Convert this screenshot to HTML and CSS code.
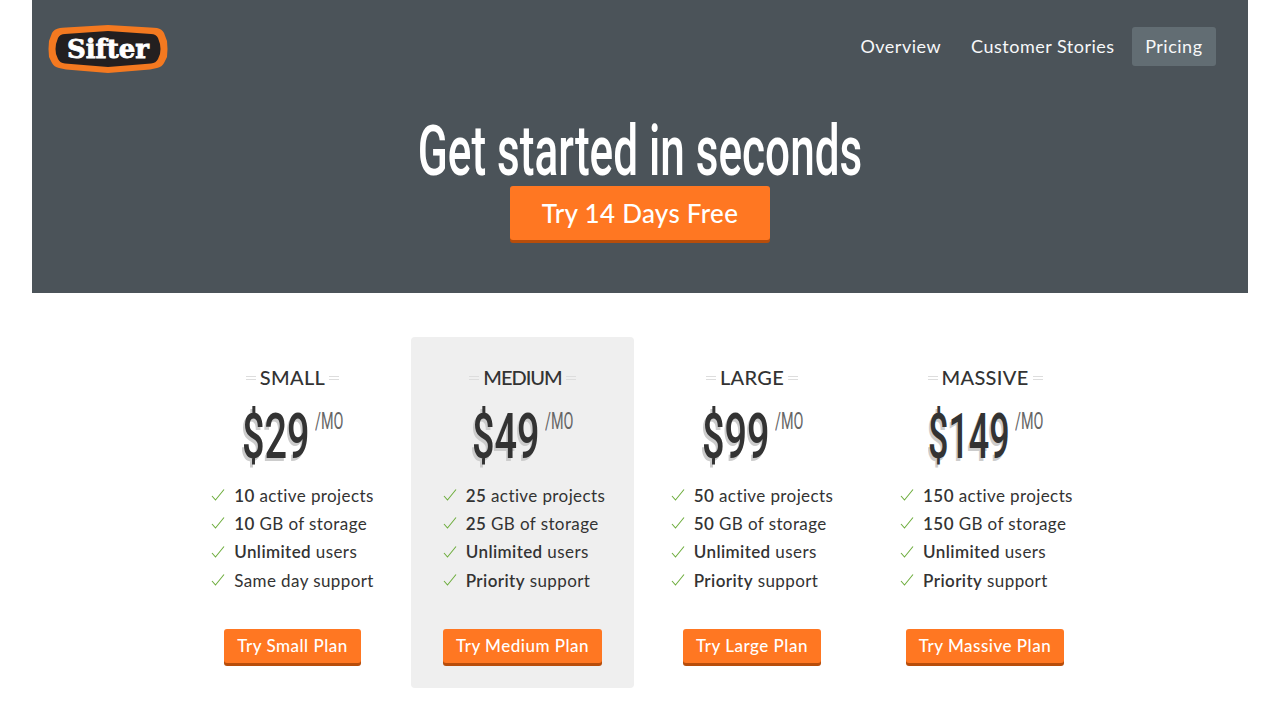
FILE: index.html
```html
<!DOCTYPE html>
<html lang="en">

<head>
  <meta charset="UTF-8">
  <title>Sifter Pricing</title>
  <link rel="stylesheet" href="styles.css">
</head>

<body>
  <svg class="defs" width="0" height="0">
    <symbol id="check" viewBox="0 0 14 14">
      <path d="M1 8 L4.500 12 L13 1.500" fill="none" stroke="#6fae3f" stroke-width="1.100"/>
    </symbol>
  </svg>

  <div class="hero">
    <div class="nav">
      <a class="logo" href="#">
        <svg width="120" height="48" viewBox="0 0 120 48">
          <path d="M12 3 Q14 2.500 18 2.500 L60 0 L102 2.500 Q106 2.500 109 3 Q114 4 116 8 L119 16 Q120 24 119 32 L116 38 Q114 42 109 43 L102 44.500 L60 48 L18 44.500 L11 43 Q6 42 4 38 L1 32 Q0 24 1 16 L4 8 Q6 4 12 3 Z" fill="#f47920"/>
          <path d="M17 9 L60 6 L103 9 Q108 9 110 13 L112 19 Q113 24 112 29 L110 34 Q108 38 103 38.500 L60 42 L17 38.500 Q12 38 10 34 L8 29 Q7 24 8 19 L10 13 Q12 9 17 9 Z" fill="#231f20"/>
          <text class="logoText" x="60" y="33" text-anchor="middle">Sifter</text>
        </svg>
      </a>
      <div class="links">
        <a href="#">Overview</a>
        <a href="#">Customer Stories</a>
        <a class="active" href="#">Pricing</a>
      </div>
    </div>
    <h1>Get started in seconds</h1>
    <a class="btn big" href="#">Try 14 Days Free</a>
  </div>

  <div class="plans">
    <div class="plan">
      <h2><span>SMALL</span></h2>
      <div class="price"><b>$29</b><i>/MO</i></div>
      <ul>
        <li><svg class="tick"><use href="#check"/></svg><b>10</b> active projects</li>
        <li><svg class="tick"><use href="#check"/></svg><b>10</b> GB of storage</li>
        <li><svg class="tick"><use href="#check"/></svg><b>Unlimited</b> users</li>
        <li><svg class="tick"><use href="#check"/></svg>Same day support</li>
      </ul>
      <a class="btn" href="#">Try Small Plan</a>
    </div>

    <div class="plan featured">
      <h2 class="tight"><span>MEDIUM</span></h2>
      <div class="price"><b>$49</b><i>/MO</i></div>
      <ul>
        <li><svg class="tick"><use href="#check"/></svg><b>25</b> active projects</li>
        <li><svg class="tick"><use href="#check"/></svg><b>25</b> GB of storage</li>
        <li><svg class="tick"><use href="#check"/></svg><b>Unlimited</b> users</li>
        <li><svg class="tick"><use href="#check"/></svg><b>Priority</b> support</li>
      </ul>
      <a class="btn" href="#">Try Medium Plan</a>
    </div>

    <div class="plan">
      <h2><span>LARGE</span></h2>
      <div class="price"><b>$99</b><i>/MO</i></div>
      <ul>
        <li><svg class="tick"><use href="#check"/></svg><b>50</b> active projects</li>
        <li><svg class="tick"><use href="#check"/></svg><b>50</b> GB of storage</li>
        <li><svg class="tick"><use href="#check"/></svg><b>Unlimited</b> users</li>
        <li><svg class="tick"><use href="#check"/></svg><b>Priority</b> support</li>
      </ul>
      <a class="btn" href="#">Try Large Plan</a>
    </div>

    <div class="plan">
      <h2><span>MASSIVE</span></h2>
      <div class="price wide"><b>$149</b><i>/MO</i></div>
      <ul>
        <li><svg class="tick"><use href="#check"/></svg><b>150</b> active projects</li>
        <li><svg class="tick"><use href="#check"/></svg><b>150</b> GB of storage</li>
        <li><svg class="tick"><use href="#check"/></svg><b>Unlimited</b> users</li>
        <li><svg class="tick"><use href="#check"/></svg><b>Priority</b> support</li>
      </ul>
      <a class="btn" href="#">Try Massive Plan</a>
    </div>
  </div>
</body>
</html>
```

FILE: styles.css
```css
body {
  margin: 0;
  background: #fff;
  color: #333;
  font-family: "Lato", "Noto Sans", sans-serif;
}

a {
  text-decoration: none;
}

.defs {
  display: block;
}

.hero {
  margin: 0 32px;
  height: 293px;
  background: #4b5359;
  text-align: center;
  overflow: hidden;
}

.nav {
  display: flex;
  justify-content: space-between;
  padding: 25px 32px 0 16px;
  height: 48px;
}

.logo {
  display: block;
  height: 48px;
}

.logoText {
  font-family: "DejaVu Serif", serif;
  font-size: 26px;
  font-weight: bold;
  fill: #fff;
  stroke: #fff;
  stroke-width: .8px;
}

.links {
  display: flex;
  align-items: flex-start;
  padding-top: 2px;
}

.links a {
  color: #f7f8f9;
  font-size: 18px;
  letter-spacing: .5px;
  line-height: 39px;
  padding: 0 13px;
  margin-left: 4px;
  border-radius: 3px;
}

.links a.active {
  background: #626d73;
  padding: 0 13.500px;
}

h1 {
  margin: 42px 0 0;
  height: 71px;
  color: #fff;
  font-family: "Roboto", sans-serif;
  font-size: 70px;
  font-weight: 500;
  line-height: 73px;
  white-space: nowrap;
  transform: scaleX(.63);
}

.btn {
  display: inline-block;
  background: #ff7722;
  color: #fff;
  font-size: 17px;
  font-weight: 500;
  letter-spacing: .5px;
  line-height: 34px;
  padding: 0 13px;
  border-radius: 3px;
  box-shadow: 0 3px 0 #b84d0a;
}

.btn.big {
  width: 260px;
  box-sizing: border-box;
  font-size: 26px;
  line-height: 54px;
  padding: 0;
  letter-spacing: .3px;
}

.plans {
  display: grid;
  grid-template-columns: 237px 223px 236px 230px;
  margin: 44px 0 0 174px;
}

.plan {
  box-sizing: border-box;
  padding-top: 24px;
  height: 351px;
  text-align: center;
}

.featured {
  background: #efefef;
  border-radius: 4px;
}

h2 {
  margin: 0;
  font-size: 20px;
  font-weight: 500;
  line-height: 32px;
  letter-spacing: .3px;
}

h2.tight {
  letter-spacing: -1px;
}

h2 span::before,
h2 span::after {
  content: "";
  display: inline-block;
  width: 10px;
  height: 2px;
  margin: 0 4px;
  vertical-align: 5px;
  border-top: 1px solid #ddd;
  border-bottom: 1px solid #ddd;
}

.price {
  display: flex;
  justify-content: center;
  height: 72px;
  padding-top: 8px;
}

.price b {
  width: 68px;
  font-family: "Roboto", sans-serif;
  font-size: 63px;
  font-weight: 500;
  line-height: 72px;
  text-align: left;
  white-space: nowrap;
  color: #333;
  text-shadow: -3px 3px 0 #ccc;
  transform: scaleX(.63);
  transform-origin: left;
}

.price i {
  width: 28px;
  font-family: "Roboto", sans-serif;
  font-size: 24px;
  font-style: normal;
  font-weight: 400;
  line-height: 40px;
  text-align: left;
  white-space: nowrap;
  color: #666;
  margin-left: 5px;
  transform: scaleX(.6);
  transform-origin: left;
}

.price.wide b {
  width: 82px;
  transform: scaleX(.57);
}

ul {
  display: inline-block;
  margin: 8px 0 35px;
  padding: 0;
  list-style: none;
  text-align: left;
  vertical-align: top;
}

.plan:nth-child(even) ul {
  margin-left: 3px;
}

li {
  display: flex;
  align-items: center;
  height: 28.330px;
  font-size: 17px;
  letter-spacing: .4px;
  white-space: pre;
}

.tick {
  width: 14px;
  height: 14px;
  margin-right: 9px;
}

li b {
  font-weight: 600;
}
```
